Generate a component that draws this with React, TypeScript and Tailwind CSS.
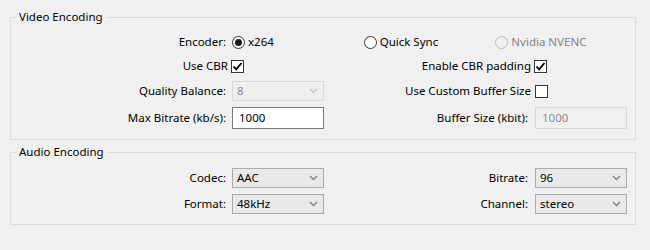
import React from "react";

function Radio({ checked, disabled, label }: { checked?: boolean; disabled?: boolean; label: string }) {
  return (
    <div className="flex items-center gap-[3px]">
      <span
        className={
          "w-[13px] h-[13px] rounded-full border flex items-center justify-center " +
          (disabled ? "border-[#bcbcbc] bg-[#f0f0f0]" : "border-[#333333] bg-white")
        }
      >
        {checked && <span className="w-[7px] h-[7px] rounded-full bg-[#1a1a1a]" />}
      </span>
      <span className={disabled ? "text-[#838383]" : "text-black"}>{label}</span>
    </div>
  );
}

function Check({ checked }: { checked?: boolean }) {
  return (
    <span className="w-[13px] h-[13px] border border-[#333333] bg-white flex items-center justify-center">
      {checked && (
        <svg width="11" height="11" viewBox="0 0 11 11">
          <path d="M1.5 5.5 L4.2 8.3 L9.5 2" fill="none" stroke="#000" strokeWidth="1.8" />
        </svg>
      )}
    </span>
  );
}

function Chevron({ color }: { color: string }) {
  return (
    <svg width="9" height="6" viewBox="0 0 9 6" className="shrink-0">
      <path d="M1 1 L4.5 4.5 L8 1" fill="none" stroke={color} strokeWidth="1.5" />
    </svg>
  );
}

function Select({ value, disabled }: { value: string; disabled?: boolean }) {
  return (
    <div
      className={
        "w-[92px] h-[20px] flex items-center justify-between pl-[4px] pr-[5px] border " +
        (disabled ? "border-[#d9d9d9] bg-[#efefef] text-[#8d8d8d]" : "border-[#acacac] bg-[#e9e9e9] text-black")
      }
    >
      <span>{value}</span>
      <Chevron color={disabled ? "#c8c8c8" : "#858585"} />
    </div>
  );
}

function Input({ value, disabled }: { value: string; disabled?: boolean }) {
  return (
    <div
      className={
        "w-[92px] h-[22px] flex items-center pl-[6px] border " +
        (disabled ? "border-[#d9d9d9] bg-[#f0f0f0] text-[#8d8d8d]" : "border-[#7a7a7a] bg-white text-black")
      }
    >
      {value}
    </div>
  );
}

export default function App() {
  const lbl = "text-right pr-[6px]";
  const lblR = "text-right pr-[7px]";
  return (
    <div className="w-[650px] h-[250px] bg-[#f0f0f0] pt-[9px] font-['Noto_Sans','Open_Sans',sans-serif] text-[11.5px] leading-[16px] text-black overflow-hidden">
      <fieldset className="ml-[10px] w-[626px] border border-[#dcdcdc] p-0 m-0">
        <legend className="ml-[5px] px-[3px] leading-[16px]">Video Encoding</legend>
        <div className="grid grid-cols-[221px_92px_211px_92px] grid-rows-[24px_24px_26px_28px] items-center pt-[5px] pb-[7px]">
          <div className={lbl}>Encoder:</div>
          <div className="col-span-3 grid grid-cols-3">
            <Radio checked label="x264" />
            <Radio label="Quick Sync" />
            <Radio disabled label="Nvidia NVENC" />
          </div>

          <div className="text-right pr-[4px]">Use CBR</div>
          <div className="-ml-[1px]">
            <Check checked />
          </div>
          <div className="text-right pr-[4px]">Enable CBR padding</div>
          <div className="-ml-[1px]">
            <Check checked />
          </div>

          <div className={lbl}>Quality Balance:</div>
          <Select value="8" disabled />
          <div className="text-right pr-[4px]">Use Custom Buffer Size</div>
          <div>
            <Check />
          </div>

          <div className={lbl}>Max Bitrate (kb/s):</div>
          <Input value="1000" />
          <div className={lblR}>Buffer Size (kbit):</div>
          <Input value="1000" disabled />
        </div>
      </fieldset>

      <fieldset className="ml-[10px] mt-[4px] w-[626px] border border-[#dcdcdc] p-0">
        <legend className="ml-[5px] px-[3px] leading-[16px]">Audio Encoding</legend>
        <div className="grid grid-cols-[221px_92px_211px_92px] grid-rows-[26px_26px] items-center pt-[5px] pb-[7px]">
          <div className={lbl}>Codec:</div>
          <Select value="AAC" />
          <div className={lblR}>Bitrate:</div>
          <Select value="96" />

          <div className={lbl}>Format:</div>
          <Select value="48kHz" />
          <div className={lblR}>Channel:</div>
          <Select value="stereo" />
        </div>
      </fieldset>
    </div>
  );
}
